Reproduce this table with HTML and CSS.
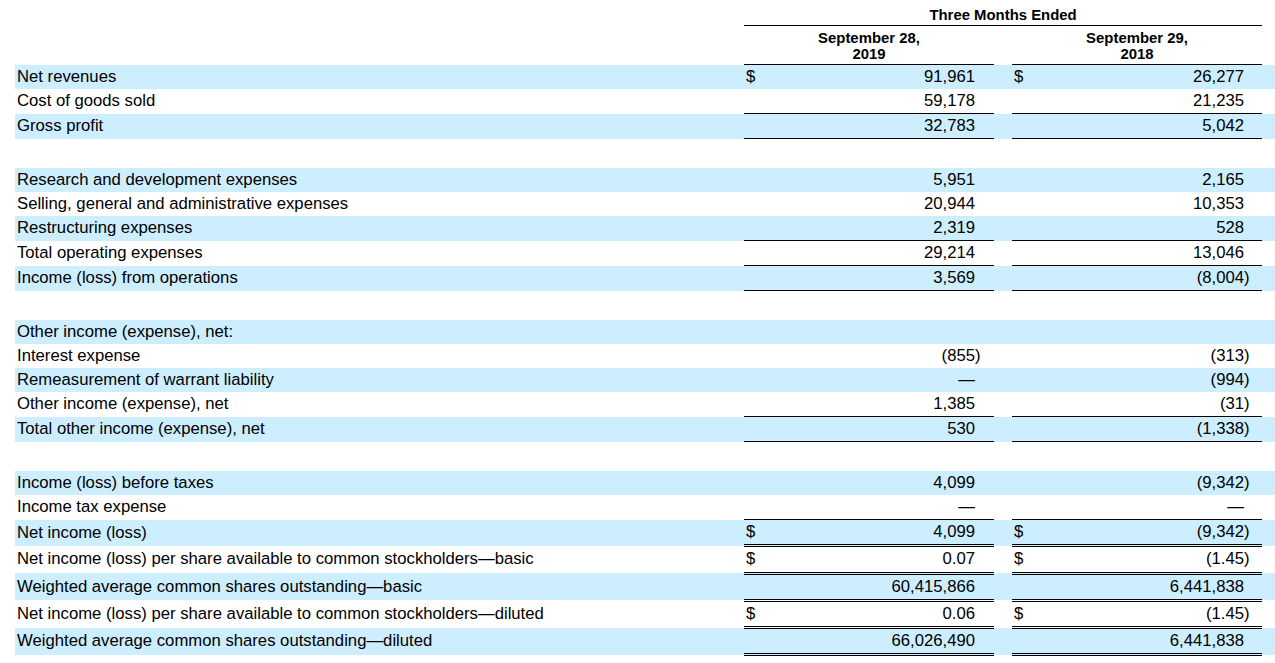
FILE: index.html
```html
<!DOCTYPE html>
<html lang="en">
<head>
<meta charset="utf-8">
<title>Condensed Consolidated Statements of Operations</title>
<link rel="stylesheet" href="styles.css">
</head>
<body>
<div class="page">
<table class="fin">
  <colgroup>
    <col class="c-label">
    <col class="c-cur">
    <col class="c-num1">
    <col class="c-par1">
    <col class="c-gap">
    <col class="c-cur">
    <col class="c-num2">
    <col class="c-par2">
    <col class="c-end">
  </colgroup>
  <thead>
    <tr class="h1">
      <td></td>
      <td colspan="7" class="hd">Three Months Ended</td>
      <td></td>
    </tr>
    <tr class="h2">
      <td></td>
      <td colspan="3" class="hd">September 28,<br>2019</td>
      <td></td>
      <td colspan="3" class="hd">September 29,<br>2018</td>
      <td></td>
    </tr>
  </thead>
  <tbody>
    <tr class="alt">
      <td class="lbl">Net revenues</td>
      <td class="cur">$</td><td class="num">91,961</td><td class="par"></td>
      <td></td>
      <td class="cur">$</td><td class="num">26,277</td><td class="par"></td>
      <td></td>
    </tr>
    <tr class="sb">
      <td class="lbl">Cost of goods sold</td>
      <td class="cur"></td><td class="num">59,178</td><td class="par"></td>
      <td></td>
      <td class="cur"></td><td class="num">21,235</td><td class="par"></td>
      <td></td>
    </tr>
    <tr class="alt sb">
      <td class="lbl">Gross profit</td>
      <td class="cur"></td><td class="num">32,783</td><td class="par"></td>
      <td></td>
      <td class="cur"></td><td class="num">5,042</td><td class="par"></td>
      <td></td>
    </tr>
    <tr class="gapr"><td colspan="9"></td></tr>
    <tr class="alt">
      <td class="lbl">Research and development expenses</td>
      <td class="cur"></td><td class="num">5,951</td><td class="par"></td>
      <td></td>
      <td class="cur"></td><td class="num">2,165</td><td class="par"></td>
      <td></td>
    </tr>
    <tr>
      <td class="lbl">Selling, general and administrative expenses</td>
      <td class="cur"></td><td class="num">20,944</td><td class="par"></td>
      <td></td>
      <td class="cur"></td><td class="num">10,353</td><td class="par"></td>
      <td></td>
    </tr>
    <tr class="alt sb">
      <td class="lbl">Restructuring expenses</td>
      <td class="cur"></td><td class="num">2,319</td><td class="par"></td>
      <td></td>
      <td class="cur"></td><td class="num">528</td><td class="par"></td>
      <td></td>
    </tr>
    <tr class="sb">
      <td class="lbl">Total operating expenses</td>
      <td class="cur"></td><td class="num">29,214</td><td class="par"></td>
      <td></td>
      <td class="cur"></td><td class="num">13,046</td><td class="par"></td>
      <td></td>
    </tr>
    <tr class="alt sb">
      <td class="lbl">Income (loss) from operations</td>
      <td class="cur"></td><td class="num">3,569</td><td class="par"></td>
      <td></td>
      <td class="cur"></td><td class="num">(8,004</td><td class="par">)</td>
      <td></td>
    </tr>
    <tr class="gapr"><td colspan="9"></td></tr>
    <tr class="alt">
      <td class="lbl">Other income (expense), net:</td>
      <td class="cur"></td><td class="num"></td><td class="par"></td>
      <td></td>
      <td class="cur"></td><td class="num"></td><td class="par"></td>
      <td></td>
    </tr>
    <tr>
      <td class="lbl">Interest expense</td>
      <td class="cur"></td><td class="num">(855</td><td class="par">)</td>
      <td></td>
      <td class="cur"></td><td class="num">(313</td><td class="par">)</td>
      <td></td>
    </tr>
    <tr class="alt">
      <td class="lbl">Remeasurement of warrant liability</td>
      <td class="cur"></td><td class="num">—</td><td class="par"></td>
      <td></td>
      <td class="cur"></td><td class="num">(994</td><td class="par">)</td>
      <td></td>
    </tr>
    <tr class="sb">
      <td class="lbl">Other income (expense), net</td>
      <td class="cur"></td><td class="num">1,385</td><td class="par"></td>
      <td></td>
      <td class="cur"></td><td class="num">(31</td><td class="par">)</td>
      <td></td>
    </tr>
    <tr class="alt sb">
      <td class="lbl">Total other income (expense), net</td>
      <td class="cur"></td><td class="num">530</td><td class="par"></td>
      <td></td>
      <td class="cur"></td><td class="num">(1,338</td><td class="par">)</td>
      <td></td>
    </tr>
    <tr class="gapr"><td colspan="9"></td></tr>
    <tr class="alt">
      <td class="lbl">Income (loss) before taxes</td>
      <td class="cur"></td><td class="num">4,099</td><td class="par"></td>
      <td></td>
      <td class="cur"></td><td class="num">(9,342</td><td class="par">)</td>
      <td></td>
    </tr>
    <tr class="sb">
      <td class="lbl">Income tax expense</td>
      <td class="cur"></td><td class="num">—</td><td class="par"></td>
      <td></td>
      <td class="cur"></td><td class="num">—</td><td class="par"></td>
      <td></td>
    </tr>
    <tr class="alt db">
      <td class="lbl">Net income (loss)</td>
      <td class="cur">$</td><td class="num">4,099</td><td class="par"></td>
      <td></td>
      <td class="cur">$</td><td class="num">(9,342</td><td class="par">)</td>
      <td></td>
    </tr>
    <tr class="db">
      <td class="lbl">Net income (loss) per share available to common stockholders—basic</td>
      <td class="cur">$</td><td class="num">0.07</td><td class="par"></td>
      <td></td>
      <td class="cur">$</td><td class="num">(1.45</td><td class="par">)</td>
      <td></td>
    </tr>
    <tr class="alt db">
      <td class="lbl">Weighted average common shares outstanding—basic</td>
      <td class="cur"></td><td class="num">60,415,866</td><td class="par"></td>
      <td></td>
      <td class="cur"></td><td class="num">6,441,838</td><td class="par"></td>
      <td></td>
    </tr>
    <tr class="db">
      <td class="lbl">Net income (loss) per share available to common stockholders—diluted</td>
      <td class="cur">$</td><td class="num">0.06</td><td class="par"></td>
      <td></td>
      <td class="cur">$</td><td class="num">(1.45</td><td class="par">)</td>
      <td></td>
    </tr>
    <tr class="alt db">
      <td class="lbl">Weighted average common shares outstanding—diluted</td>
      <td class="cur"></td><td class="num">66,026,490</td><td class="par"></td>
      <td></td>
      <td class="cur"></td><td class="num">6,441,838</td><td class="par"></td>
      <td></td>
    </tr>
  </tbody>
</table>
</div>
</body>
</html>
```

FILE: styles.css
```css
html, body {
  margin: 0;
  padding: 0;
  background: #ffffff;
  overflow: hidden;
}

.page {
  padding: 0 0 0 15px;
}

.fin {
  border-collapse: collapse;
  table-layout: fixed;
  width: 1260px;
  font-family: "Liberation Sans", Arial, sans-serif;
  font-size: 16.7px;
  color: #000000;
}

.c-label { width: 729px; }
.c-cur { width: 20px; }
.c-num1 { width: 211px; }
.c-par1 { width: 19px; }
.c-gap { width: 18px; }
.c-num2 { width: 212px; }
.c-par2 { width: 18px; }
.c-end { width: 13px; }

.fin td {
  padding: 0;
  height: 24px;
  line-height: 18px;
  vertical-align: middle;
  white-space: nowrap;
  overflow: visible;
}

.fin .hd {
  font-weight: bold;
  font-size: 14.9px;
  line-height: 16px;
  text-align: center;
  vertical-align: bottom;
  padding-bottom: 2px;
  border-bottom: 1px solid #000000;
}

.fin .h1 td {
  height: 23px;
}

.fin .h2 td {
  height: 36px;
}

.fin tr.alt td {
  background: #cceeff;
}

.fin .lbl {
  padding-left: 2px;
}

.fin .cur {
  padding-left: 2px;
}

.fin .num {
  text-align: right;
}

.fin .par {
  text-align: left;
}

.fin tr.sb td.cur,
.fin tr.sb td.num,
.fin tr.sb td.par {
  border-bottom: 1px solid #000000;
}

.fin tr.db td {
  height: 24.25px;
}

.fin tr.db td.cur,
.fin tr.db td.num,
.fin tr.db td.par {
  border-bottom: 3px double #000000;
}

.fin tr.gapr td {
  height: 29px;
  background: transparent;
}
```
